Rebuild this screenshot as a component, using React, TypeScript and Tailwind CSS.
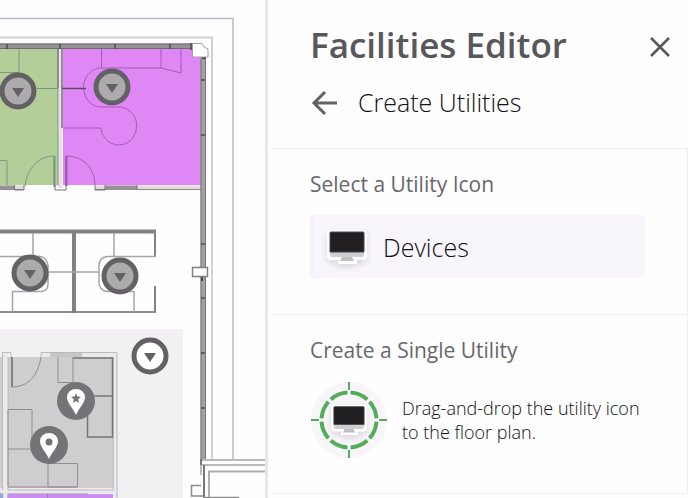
import React from "react";

type MarkerProps = { x: number; y: number; fill?: string };

const DropMarker: React.FC<MarkerProps> = ({ x, y, fill = "#acaaad" }) => (
  <g transform={`translate(${x} ${y})`}>
    <circle r="16" fill={fill} stroke="#636164" strokeWidth="5" />
    <path d="M-6 -3H6L0 6Z" fill="#636164" />
  </g>
);

const PinMarker: React.FC<MarkerProps & { star?: boolean }> = ({ x, y, star }) => (
  <g transform={`translate(${x} ${y})`}>
    <circle r="19" fill="#757378" />
    <path d="M0 14C-3 7 -9 2 -9 -4A9 8 0 0 1 9 -4C9 2 3 7 0 14Z" fill="#fff" />
    {star ? (
      <path
        d="M0 -8L1.4 -4.4L5 -4.2L2.2 -1.8L3.1 2L0 0L-3.1 2L-2.2 -1.8L-5 -4.2L-1.4 -4.4Z"
        fill="#757378"
      />
    ) : (
      <circle cy="-3" r="3.5" fill="#757378" />
    )}
  </g>
);

const FloorPlan: React.FC = () => (
  <svg
    viewBox="0 0 269 498"
    preserveAspectRatio="xMaxYMin slice"
    className="block h-full w-full"
    fill="none"
    role="img"
    aria-label="Floor plan"
  >
    {/* Outer walls */}
    <g stroke="#bdb9c0">
      <path d="M0 18.500H233V459" strokeWidth="1.500" />
      <path d="M0 37.500H212V459" stroke="#d2cfd4" strokeWidth="2" />
    </g>

    {/* Top offices */}
    <path d="M0 49H58V185H0Z" fill="#b4ce9a" />
    <path d="M63 49H201V185H63Z" fill="#df88f5" />
    <path d="M0 46H193" stroke="#959396" strokeWidth="5" />
    <path d="M0 44H193M0 48.500H193" stroke="#6f6c70" />
    <path d="M7 44V49M60 44V49M115 44V49M170 44V49M191 43V50" stroke="#504e52" strokeWidth="1.500" />
    <path d="M60.500 49V188" stroke="#e6e3e8" strokeWidth="4" />
    <path d="M58 49V88M62 49V128" stroke="#777379" strokeWidth="1.500" />
    <g stroke="#7f957d">
      <path d="M0 72.500H19V49M37 88.500H58M0 160.500H7V185M25 186C27 168 39 156 54 156V185" />
      <path d="M54.500 156V187" strokeWidth="2" />
      <path d="M58 88V186" />
    </g>
    <g stroke="#a45bb8">
      <path d="M101.500 49V68H161L181 73V49M161 49V68M101 68A17 19 0 0 0 101 107H118A18 19 0 1 1 101 129V128H63" />
      <path d="M67 186V156C84 157 94 167 95 185" />
      <path d="M66 156V186" strokeWidth="2" />
    </g>
    <path d="M62 88.500H86" stroke="#68466f" strokeWidth="1.500" />

    {/* Corridor wall */}
    <path d="M0 187.500H24M95 187.500H201" stroke="#dedcdf" strokeWidth="4" />
    <path d="M0 189.500H24M95 189.500H201" stroke="#8d898f" />
    <path d="M0 187.500H14M105 187.500H137" stroke="#969398" strokeWidth="4" />
    <path d="M14.500 185V190H24V185M55 185V190H66V185M95 185V190H105V185M137 185V190" stroke="#79757b" />

    {/* Window wall */}
    <path d="M203 57V459" stroke="#a3a1a5" strokeWidth="5" />
    <path d="M201 57V475M205.500 57V459" stroke="#77747a" />
    <path d="M201 80H205M201 135H205M201 244H205M201 298H205M201 353H205M201 408H205" stroke="#504e52" strokeWidth="1.500" />
    <path d="M202 58H206M202 276V281" stroke="#444146" strokeWidth="2" />
    <path d="M192.500 43.500H202L204 47L208 49V57H192.500Z" fill="#fff" stroke="#a5a1a8" />
    <path d="M192.500 267.500H207.500V276.500H192.500Z" fill="#fff" stroke="#817e84" strokeWidth="1.500" />

    {/* Lower right stairwell */}
    <path d="M202 460H267M202 465H267" stroke="#77747a" />
    <path d="M201 459V465M204 465V498" stroke="#77747a" strokeWidth="2" />
    <path d="M209 498V471.500H267" stroke="#b0adb2" strokeWidth="2" />
    <path d="M201 485.500H191.500V496H203M203 497.500H239" stroke="#8e8a90" strokeWidth="1.500" />

    {/* Cubicles */}
    <path d="M0 231.500H156" stroke="#858287" strokeWidth="4" />
    <path d="M0 312H156" stroke="#918d93" strokeWidth="2" />
    <path d="M74 230V313" stroke="#828084" strokeWidth="4" />
    <path d="M155 230V257M155 286V313" stroke="#858187" strokeWidth="2" />
    <g stroke="#a7a3aa" strokeWidth="1.500">
      <path d="M33 233V257M0 256.500H28M12.500 312V291.500H41Q48 291 48 284V265Q47 257 38 256" />
      <path d="M48 272H99M114 233V257M156 256.500H108Q99 257 99 266V282Q99 291 108 291.500H134V312" />
    </g>

    {/* Lower office */}
    <path d="M0 329H183V498H0Z" fill="#f3f0f3" />
    <path d="M8 357H115V488H8Z" fill="#d0cdd1" />
    <path d="M0 357H2V488H0Z" fill="#d0cdd1" />
    <path d="M5 353V498M41 355H116V498M0 491H116" stroke="#ece9ed" strokeWidth="4" />
    <path d="M8 494H113V498H8Z" fill="#ca8df0" />
    <path d="M0 494H3V498H0Z" fill="#82a8df" />
    <path d="M2.500 352.500H11V357M2.500 352.500V490M8 357V490H113V357M41 357V352.500H117V498M0 493.500H3V498M7.500 498V493.500H88" stroke="#bdb9bf" />
    <path d="M50 355H82" stroke="#c7c4c9" strokeWidth="4" />
    <path d="M11.500 357V387C29 387 38 375 41 357" stroke="#8f8b92" />
    <path d="M12 357V387" stroke="#858188" strokeWidth="2" />
    <path d="M58 357V382.500H73V357M8 409.500H32V449H8ZM8 449V487M48 487V463.500H77.500V487ZM8 487H77M47.500 494V498" stroke="#918d95" />
    <path d="M73 358H112.500V437H87.500V396H112" stroke="#77737a" strokeWidth="1.500" />

    <DropMarker x={18} y={91} />
    <DropMarker x={112} y={87} />
    <DropMarker x={30} y={273} />
    <DropMarker x={120} y={276} />
    <DropMarker x={150} y={356} fill="#fff" />
    <PinMarker x={76} y={401} star />
    <PinMarker x={49} y={445} />

    {/* Edge of the side panel */}
    <path d="M266.500 0V498" stroke="#e9e5e9" strokeWidth="3" />
  </svg>
);

const Monitor: React.FC<{ className: string }> = ({ className }) => (
  <svg viewBox="0 0 40 36" className={className} fill="none" aria-hidden="true">
    <path
      d="M4 2H36Q39 2 39 5V27Q39 30 36 30H29V34H12V30H4Q1 30 1 27V5Q1 2 4 2Z"
      fill="#fff"
      stroke="#fff"
      strokeWidth="2"
      strokeLinejoin="round"
    />
    <path d="M3 23H37V26Q37 28 35 28H5Q3 28 3 26Z" fill="#cfd0d5" />
    <path d="M4 3H36Q37 3 37 4V23H3V4Q3 3 4 3Z" fill="#211f22" stroke="#48464a" />
    <path d="M15 28H25L27 32H13Z" fill="#bfc0c4" />
  </svg>
);

const Target: React.FC = () => (
  <svg viewBox="0 0 78 78" className="h-full w-full" fill="none" aria-hidden="true">
    <circle cx="39" cy="39" r="38" fill="#f8f6fb" />
    <circle
      cx="39"
      cy="39"
      r="27.500"
      stroke="#52ad59"
      strokeWidth="4"
      pathLength="80"
      strokeDasharray="8.5 1.5"
      strokeDashoffset="-0.75"
    />
    <path d="M39 1V9M39 69V77M1 39H9M69 39H77" stroke="#52ad59" strokeWidth="2" />
  </svg>
);

const App: React.FC = () => {
  return (
    <div className="grid min-h-screen grid-cols-[269fr_419fr] bg-[#fefefe] font-['Open_Sans',sans-serif]">
      <main className="min-w-0 overflow-hidden">
        <FloorPlan />
      </main>

      <aside className="min-w-0 text-[#111013]">
        {/* Panel header */}
        <header className="border-b border-[#f1f0f8] pt-5 pr-3 pb-[31px] pl-[41px]">
          <div className="flex items-center justify-between">
            <h1 className="text-[35px] leading-[50px] font-semibold whitespace-nowrap text-[#58575b]">
              Facilities Editor
            </h1>
            <button type="button" aria-label="Close" className="p-1 pt-2 text-[#58575b]">
              <svg viewBox="0 0 24 24" className="size-6" fill="none" stroke="currentColor" strokeWidth="2.500">
                <path d="M3 3L21 21M21 3L3 21" />
              </svg>
            </button>
          </div>
          <div className="mt-[17px] flex items-center gap-5">
            <button type="button" aria-label="Back" className="text-[#626165]">
              <svg viewBox="0 0 28 28" className="size-7" fill="none" stroke="currentColor" strokeWidth="3">
                <path d="M27 15H4M15 4L4 15L15 26" />
              </svg>
            </button>
            <h2 className="text-[25px] leading-[30px] font-light">Create Utilities</h2>
          </div>
        </header>

        {/* Icon choice */}
        <section className="border-r border-b border-[#f1f0f8] pt-[19px] pr-[42px] pb-9 pl-[41px]">
          <h3 className="text-[21px] leading-8 text-[#68676b]">Select a Utility Icon</h3>
          <button
            type="button"
            className="mt-[15px] flex h-[63px] w-full items-center gap-4 rounded border-l-4 border-[#f6f2f5] bg-[#f8f6fc] pl-[13px]"
          >
            <Monitor className="h-9 w-10 drop-shadow-md" />
            <span className="text-[25px] leading-8 font-light">Devices</span>
          </button>
        </section>

        {/* Drag source */}
        <section className="border-r border-b border-[#f1f0f8] pt-[19px] pr-[42px] pb-[34px] pl-[41px]">
          <h3 className="text-[21px] leading-8 text-[#68676b]">Create a Single Utility</h3>
          <div className="mt-[15px] flex items-center gap-[14px]">
            <div className="grid size-[78px] shrink-0 place-items-center">
              <div className="col-start-1 row-start-1 size-[78px]">
                <Target />
              </div>
              <Monitor className="col-start-1 row-start-1 h-8 w-9 drop-shadow-md" />
            </div>
            <p className="text-[18px] leading-6 font-light">
              Drag-and-drop the utility icon to the floor plan.
            </p>
          </div>
        </section>
      </aside>
    </div>
  );
};

export default App;
